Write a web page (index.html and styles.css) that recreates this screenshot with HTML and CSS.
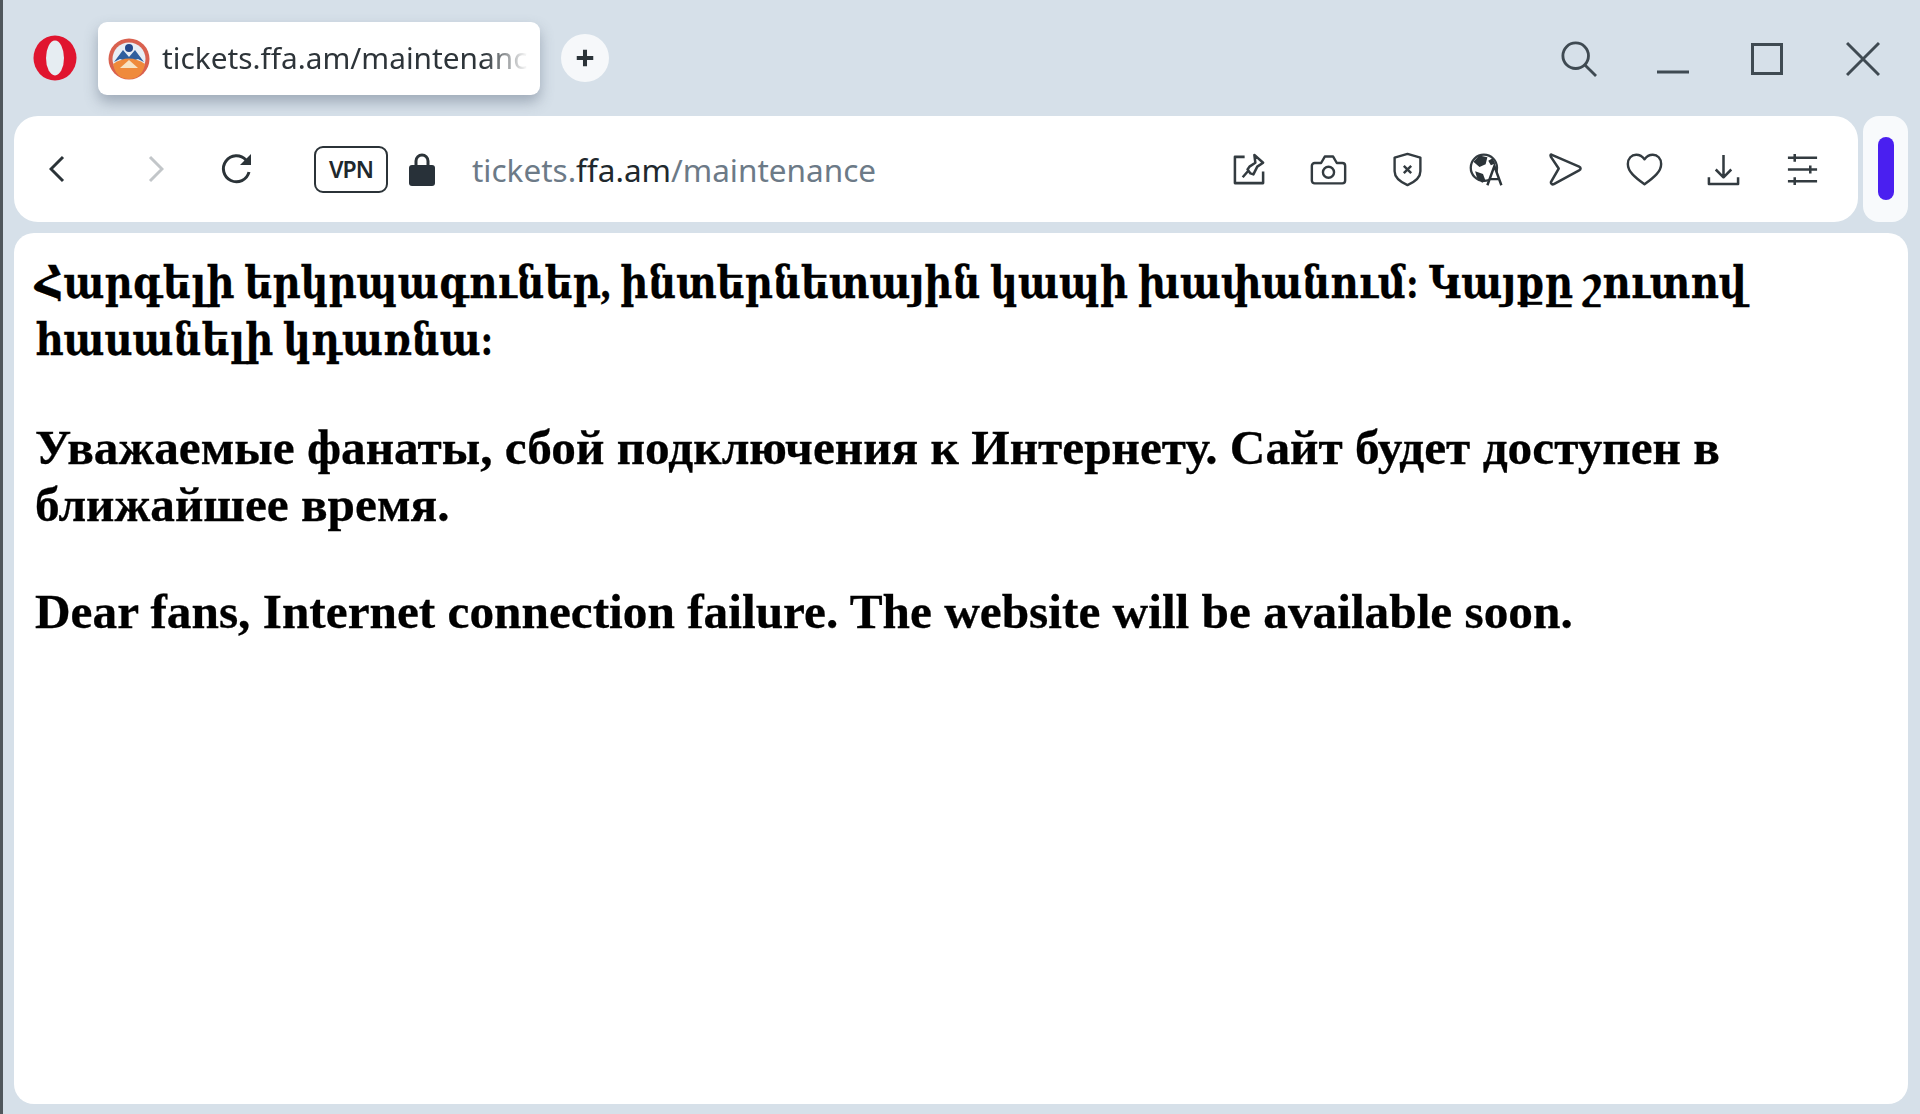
FILE: index.html
```html
<!DOCTYPE html>
<html lang="hy">
<head>
<meta charset="utf-8">
<title>tickets.ffa.am/maintenance</title>
<link rel="stylesheet" href="styles.css">
</head>
<body>
<header class="titlebar">
  <svg class="opera" viewBox="0 0 44 46"><ellipse cx="22" cy="23" rx="21.5" ry="22.5" fill="#e0152f"/><ellipse cx="22" cy="23" rx="9" ry="17.5" fill="#e6edf2"/></svg>
  <div class="tab">
    <svg class="favicon" viewBox="0 0 42 44">
      <circle cx="21" cy="22" r="20.5" fill="#d9614f"/>
      <circle cx="21" cy="22" r="16.5" fill="#e8eef5"/>
      <path d="M6 25 L15 13 L21 20 L27 13 L36 25 L30 22 L21 25 L12 22Z" fill="#2f5f9e"/>
      <circle cx="21" cy="11" r="4" fill="#24488a"/>
      <path d="M5 27 Q21 16 37 27 Q34 42 21 42 Q8 42 5 27Z" fill="#ef8a3c"/>
      <path d="M12 31 L21 23 L30 31 Z" fill="#f7e2c4"/>
    </svg>
    <span class="tab-title">tickets.ffa.am/maintenance</span>
  </div>
  <button class="newtab" aria-label="New tab"><svg viewBox="0 0 24 24"><path d="M12 3v18M3 12h18" stroke="#2b3338" stroke-width="4.4" fill="none"/></svg></button>
  <div class="window-controls">
    <svg class="wc wc-search" viewBox="0 0 38 38"><circle cx="15.500" cy="15.500" r="13.500" class="ln"/><path d="M25 25l12 12" class="ln"/></svg>
    <svg class="wc wc-min" viewBox="0 0 32 38"><path d="M0 32h32" class="ln"/></svg>
    <svg class="wc wc-max" viewBox="0 0 32 38"><rect x="1.500" y="4.500" width="29" height="29" class="ln"/></svg>
    <svg class="wc wc-close" viewBox="0 0 34 38"><path d="M1 3l32 32M33 3L1 35" class="ln"/></svg>
  </div>
</header>
<div class="toolrow">
  <nav class="toolbar">
    <svg class="nav nav-back" viewBox="0 0 16 28"><path d="M14 2L2 14l12 12" class="st"/></svg>
    <svg class="nav nav-fwd" viewBox="0 0 16 28"><path d="M2 2l12 12L2 26" class="st"/></svg>
    <svg class="nav nav-reload" viewBox="0 0 34 34"><path d="M29 20a13 13 0 1 1-3-12" class="st"/><path d="M31 2v11H20z" fill="#2b3338"/></svg>
    <span class="vpn">VPN</span>
    <svg class="lock" viewBox="0 0 26 34"><path d="M7 15V9a6 6 0 0 1 12 0v6" fill="none" stroke="#2b3338" stroke-width="3"/><rect x="0" y="13" width="26" height="21" rx="3" fill="#283139"/></svg>
    <div class="url"><span class="dim">tickets.</span><span>ffa.am</span><span class="dim">/maintenance</span></div>
    <div class="tools">
      <span class="tool"><svg viewBox="0 0 36 36"><path d="M13 5H3v27h29V20" class="th"/><path d="M23 3l9 8-6 4-4 8-3-1-3-4 2-3 6-4zM11 26l6-7" class="th"/></svg></span>
      <span class="tool"><svg viewBox="0 0 40 36"><path d="M5 11h7l4-7h9l4 7h6a3 3 0 0 1 3 3v16a3 3 0 0 1-3 3H5a3 3 0 0 1-3-3V14a3 3 0 0 1 3-3z" class="th"/><circle cx="20" cy="21" r="6" class="th"/></svg></span>
      <span class="tool"><svg viewBox="0 0 36 38"><path d="M18 2l14 4v15c0 8-7 12-14 15C11 33 4 29 4 21V6z" class="th"/><path d="M14 15l8 8M22 15l-8 8" class="th"/></svg></span>
      <span class="tool"><svg viewBox="0 0 40 40"><circle cx="17" cy="18" r="15" class="th"/><path d="M12 4l9 2-2 8-7 3-7-6zM7 22l9 3 3 8-4 2-6-6zM22 10l5-3 3 6-5 2z" fill="#2b3338"/><path d="M21 38l8-22 8 22M24 31h10" fill="#fff" stroke="#2b3338" stroke-width="2.800"/></svg></span>
      <span class="tool"><svg viewBox="0 0 36 36"><path d="M4 3l28 12c2 1 2 3 0 4L6 33c-2 1-3-1-3-2l8-14L3 5c-1-2 0-3 1-2z" class="th"/></svg></span>
      <span class="tool"><svg viewBox="0 0 40 36"><path d="M20 34C9 26 2 20 2 12 2 6 6 2 11 2c4 0 7 2 9 5 2-3 5-5 9-5 5 0 9 4 9 10 0 8-7 14-18 22z" class="th"/></svg></span>
      <span class="tool"><svg viewBox="0 0 36 36"><path d="M18 3v23M10 18l8 8 8-8M3 26v7h30v-7" class="th"/></svg></span>
      <span class="tool"><svg viewBox="0 0 36 36"><path d="M3 6h30M3 18h30M3 30h30" class="th"/><path d="M10 2v8M26 14v8M10 26v8" class="th"/></svg></span>
    </div>
  </nav>
  <aside class="sidebar"><span class="sidebar-bar"></span></aside>
</div>
<main class="page">
  <h2 class="msg msg-hy">Հարգելի երկրպագուներ, ինտերնետային կապի խափանում: Կայքը շուտով<br>հասանելի կդառնա:</h2>
  <h2 class="msg">Уважаемые фанаты, сбой подключения к Интернету. Сайт будет доступен в<br>ближайшее время.</h2>
  <h2 class="msg">Dear fans, Internet connection failure. The website will be available soon.</h2>
</main>
</body>
</html>
```
FILE: styles.css
```css
* { box-sizing: border-box; }
html, body { height: 100%; margin: 0; }
body {
  display: flex;
  flex-direction: column;
  height: 1114px;
  overflow: hidden;
  background: #d6e0e9;
  border-left: 3px solid #50575c;
  padding: 0 12px 10px 11px;
  font-family: "Liberation Serif", "DejaVu Serif", serif;
  filter: blur(.5px);
}
.titlebar {
  flex: none;
  height: 116px;
  display: flex;
  align-items: flex-start;
}
.opera { flex: none; width: 44px; height: 46px; margin: 35px 0 0 19px; }
.tab {
  flex: none;
  width: 442px;
  height: 73px;
  margin: 22px 0 0 21px;
  padding: 0 12px 0 10px;
  display: flex;
  align-items: center;
  gap: 12px;
  background: #fff;
  border-radius: 9px;
  box-shadow: 0 7px 14px rgba(90, 105, 125, .45);
}
.favicon { flex: none; width: 42px; height: 44px; }
.tab-title {
  flex: 1;
  overflow: hidden;
  white-space: nowrap;
  margin-top: -2px;
  font: 29.800px "Noto Sans", sans-serif;
  color: #2d3439;
  -webkit-mask-image: linear-gradient(to right, #000 88%, transparent 100%);
  mask-image: linear-gradient(to right, #000 88%, transparent 100%);
}
.newtab {
  flex: none;
  width: 48px;
  height: 48px;
  margin: 34px 0 0 21px;
  padding: 13px;
  border: 0;
  border-radius: 50%;
  background: #f6f8fa;
  display: flex;
}
.newtab svg { width: 22px; height: 22px; }
.window-controls { margin-left: auto; margin-right: 28px; display: flex; align-items: flex-start; margin-top: 40px; }
.wc { flex: none; height: 38px; }
.wc-search { width: 36px; margin-right: 60px; }
.wc-min { width: 32px; margin-right: 62px; }
.wc-max { width: 32px; margin-right: 63px; }
.wc-close { width: 34px; }
.ln { fill: none; stroke: #3f4a52; stroke-width: 3; }
.toolrow { flex: none; height: 106px; display: flex; gap: 5px; }
.toolbar {
  flex: 1;
  min-width: 0;
  display: flex;
  align-items: center;
  background: #fff;
  border-radius: 24px;
}
.nav { flex: none; }
.st { fill: none; stroke: #2b3338; stroke-width: 3; }
.nav-back { width: 16px; height: 28px; margin-left: 35px; }
.nav-fwd { width: 16px; height: 28px; margin-left: 83px; }
.nav-fwd .st { stroke: #c2c6c9; }
.nav-reload { width: 34px; height: 34px; margin-left: 56px; }
.vpn {
  flex: none;
  width: 74px;
  height: 47px;
  margin-left: 60px;
  border: 2.500px solid #2b3338;
  border-radius: 9px;
  display: flex;
  align-items: center;
  justify-content: center;
  font: 600 23px "Noto Sans", sans-serif;
  letter-spacing: -1px;
  color: #20282d;
}
.lock { flex: none; width: 26px; height: 34px; margin-left: 21px; }
.url {
  flex: none;
  margin-left: 37px;
  font: 31.500px "Noto Sans", sans-serif;
  color: #20282d;
  white-space: nowrap;
}
.dim { color: #6c7a87; }
.tools { margin-left: auto; margin-right: 16px; display: flex; }
.tool { flex: none; width: 79px; height: 40px; display: flex; align-items: center; justify-content: center; }
.tool svg { height: 35px; width: 37px; }
.th { fill: none; stroke: #333b40; stroke-width: 2.600; stroke-linejoin: round; }
.sidebar {
  flex: none;
  width: 45px;
  background: #f8fafc;
  border-radius: 16px;
  display: flex;
  justify-content: center;
  padding-top: 21px;
}
.sidebar-bar { width: 16px; height: 63px; background: #4a1ff0; border-radius: 8px; }
.page {
  flex: 1;
  min-height: 0;
  margin-top: 11px;
  padding: 22px 21px 0;
  background: #fff;
  border-radius: 20px;
  color: #000;
}
.msg { margin: 0 0 50px; font-size: 49.300px; line-height: 57px; font-weight: 700; white-space: nowrap; -webkit-text-stroke: .3px #000; }
.msg-hy { font-size: 44px; transform: scaleX(.882); transform-origin: left center; }
```
